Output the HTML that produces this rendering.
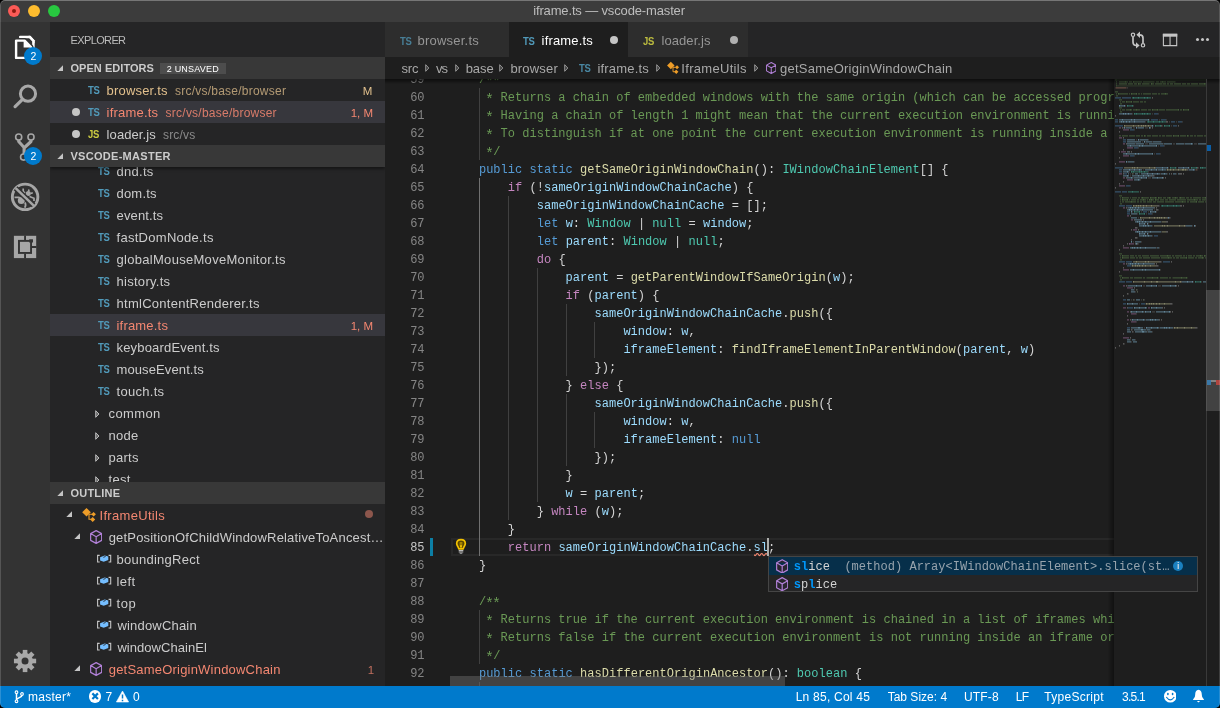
<!DOCTYPE html>
<html><head><meta charset="utf-8"><title>iframe.ts — vscode-master</title>
<style>

html,body{margin:0;padding:0;background:#000;}
body{width:1220px;height:708px;overflow:hidden;}
#win{will-change:transform;position:relative;width:1220px;height:708px;overflow:hidden;background:#1e1e1e;border-radius:5px;font-family:"Liberation Sans",sans-serif;font-size:13px;color:#ccc;}
.abs{position:absolute;}
.t{position:absolute;white-space:pre;}
#ed{position:absolute;left:0;top:0;width:1220px;height:708px;clip-path:inset(79px 106px 22px 385px);}
.cl{position:absolute;left:450px;height:18px;line-height:18px;white-space:pre;font-family:"Liberation Mono",monospace;font-size:12px;letter-spacing:0.023px;color:#d4d4d4;}
.cl i{font-style:normal;display:inline-block;width:7.224px;transform:translateY(2.7px) scale(1.25);}
.ln{position:absolute;left:385px;width:39.6px;text-align:right;height:18px;line-height:18px;font-family:"Liberation Mono",monospace;font-size:12px;letter-spacing:0.023px;}
.ic{position:absolute;font-weight:bold;font-size:10.3px;line-height:23px;height:22px;letter-spacing:-0.2px;transform-origin:0 0;transform:scaleX(0.92);}
.mono{font-family:"Liberation Mono",monospace;font-size:12px;letter-spacing:0.023px;white-space:pre;}

</style></head>
<body>
<div id="win">

<div class="abs" style="left:0;top:0;width:1220px;height:22px;background:#3c3c3c;"></div>
<div class="abs" style="left:8px;top:5px;width:12px;height:12px;border-radius:6px;background:#fc5b57;"></div>
<div class="abs" style="left:12px;top:9px;width:4px;height:4px;border-radius:2px;background:#8c1a10;"></div>
<div class="abs" style="left:28px;top:5px;width:12px;height:12px;border-radius:6px;background:#fdbc2e;"></div>
<div class="abs" style="left:48px;top:5px;width:12px;height:12px;border-radius:6px;background:#28c840;"></div>
<div class="t" style="left:533.20px;top:0px;height:22px;line-height:22px;color:#bdbdbd;font-size:13px;font-weight:normal;letter-spacing:-0.145px;">iframe.ts — vscode-master</div>


<div class="abs" style="left:0;top:22px;width:50px;height:664px;background:#333333;"></div>
<!-- files -->
<svg class="abs" style="left:0;top:22px" width="50" height="50" viewBox="0 0 50 50">
 <path d="M20.2 14.9 H29.6 L33.4 19 V31" fill="none" stroke="#fff" stroke-width="2.5" stroke-linejoin="round" stroke-linecap="round"/>
 <path d="M28.5 13.7 H30.4 L34.6 18.2 V21.5 Z" fill="#fff"/>
 <path d="M16.1 18.6 H24.6 L31 25 V35.9 H16.1 Z" fill="#333" stroke="#333" stroke-width="5" stroke-linejoin="round"/>
 <path d="M16.1 18.6 H24.6 L31 25 V35.9 H16.1 Z" fill="none" stroke="#fff" stroke-width="2.4" stroke-linejoin="round"/>
 <path d="M23.6 18.6 V25.6 H30.6 Z" fill="#fff"/>
</svg>
<div class="abs" style="left:23.8px;top:47px;width:18.4px;height:18.4px;border-radius:9.2px;background:#007acc;"></div>
<div class="abs" style="left:24.3px;top:47.3px;width:18.4px;height:18.4px;color:#fff;font-size:10.5px;line-height:18.4px;text-align:center;">2</div>
<!-- search -->
<svg class="abs" style="left:0;top:72px" width="50" height="50" viewBox="0 0 50 50">
 <circle cx="28" cy="21.7" r="7.6" fill="none" stroke="#a8a8a8" stroke-width="3"/>
 <path d="M22.5 27.4 L15.1 34.6" stroke="#a8a8a8" stroke-width="3.3" stroke-linecap="round"/>
</svg>
<!-- scm -->
<svg class="abs" style="left:0;top:122px" width="50" height="50" viewBox="0 0 50 50">
 <g fill="none" stroke="#a6a6a6">
 <path d="M18.7 17.5 V19.5 L24.1 25.5 V32 M31 17.5 V19.5 L24.6 25.5" stroke-width="3.1" stroke-linejoin="round"/>
 <circle cx="18.7" cy="15" r="3.05" stroke-width="1.6" fill="#333"/>
 <circle cx="31" cy="15" r="3.05" stroke-width="1.6" fill="#333"/>
 <circle cx="23.6" cy="35.1" r="3.05" stroke-width="1.6" fill="#333"/>
 </g>
</svg>
<div class="abs" style="left:23.8px;top:146.8px;width:18.4px;height:18.4px;border-radius:9.2px;background:#007acc;"></div>
<div class="abs" style="left:24.3px;top:147.1px;width:18.4px;height:18.4px;color:#fff;font-size:10.5px;line-height:18.4px;text-align:center;">2</div>
<!-- debug -->
<svg class="abs" style="left:0;top:172px" width="50" height="50" viewBox="0 0 50 50">
 <circle cx="25.1" cy="24.9" r="12.75" fill="none" stroke="#a6a6a6" stroke-width="2.9"/>
 <circle cx="21.3" cy="28.6" r="3.5" fill="#a6a6a6"/>
 <circle cx="28.3" cy="21.4" r="2.5" fill="#a6a6a6"/>
 <path d="M14.5 25.4 H19 L20 26.5 M25 30.5 Q26.5 33.5 24.7 35.8 M23.2 16.6 V19.3 L25 21 M29 17.5 L28.5 19.5 M30.5 21.5 L32.8 20.8 M29.5 24.5 L34 26.3 V29" stroke="#a6a6a6" stroke-width="1.7" fill="none"/>
 <path d="M15.6 16.2 L33.6 33.4" stroke="#333" stroke-width="5.4"/>
 <path d="M15.6 16.2 L34 33.8" stroke="#a6a6a6" stroke-width="2.5"/>
</svg>
<!-- extensions -->
<svg class="abs" style="left:0;top:222px" width="50" height="50" viewBox="0 0 50 50">
 <rect x="13.9" y="13.8" width="22.3" height="22.3" fill="#a6a6a6"/>
 <rect x="18" y="17.9" width="14" height="14" fill="#333"/>
 <rect x="19.95" y="19.85" width="10.15" height="10.15" fill="#a6a6a6"/>
 <rect x="24.1" y="13.5" width="1.9" height="5" fill="#333"/>
 <rect x="24.1" y="31.5" width="1.9" height="5" fill="#333"/>
 <rect x="31.5" y="24" width="5" height="2" fill="#333"/>
 <rect x="29.2" y="17.3" width="3.8" height="3.2" fill="#333"/>
</svg>
<!-- gear -->
<svg class="abs" style="left:0;top:636px" width="50" height="50" viewBox="0 0 50 50">
 <g transform="translate(25.05 25)" fill="#a8a8a8">
   <rect x="-2.3" y="-11.1" width="4.6" height="22.2"/>
   <rect x="-2.3" y="-11.1" width="4.6" height="22.2" transform="rotate(45)"/>
   <rect x="-2.3" y="-11.1" width="4.6" height="22.2" transform="rotate(90)"/>
   <rect x="-2.3" y="-11.1" width="4.6" height="22.2" transform="rotate(135)"/>
  <circle r="7.9"/>
  <circle r="3.5" fill="#333"/>
 </g>
</svg>

<div class="abs" style="left:50px;top:22px;width:335px;height:664px;background:#252526;"></div>
<div class="t" style="left:70.50px;top:29px;height:22px;line-height:22px;color:#bbbbbb;font-size:11px;font-weight:normal;letter-spacing:-0.624px;">EXPLORER</div>
<span class="ic" style="left:98.4px;top:160px;color:#519aba;opacity:1">TS</span>
<div class="t" style="left:116.50px;top:161px;height:22px;line-height:22px;color:#cccccc;font-size:13px;font-weight:normal;letter-spacing:0.277px;">dnd.ts</div>
<span class="ic" style="left:98.4px;top:182px;color:#519aba;opacity:1">TS</span>
<div class="t" style="left:116.50px;top:183px;height:22px;line-height:22px;color:#cccccc;font-size:13px;font-weight:normal;letter-spacing:0.197px;">dom.ts</div>
<span class="ic" style="left:98.4px;top:204px;color:#519aba;opacity:1">TS</span>
<div class="t" style="left:116.50px;top:205px;height:22px;line-height:22px;color:#cccccc;font-size:13px;font-weight:normal;letter-spacing:0.154px;">event.ts</div>
<span class="ic" style="left:98.4px;top:226px;color:#519aba;opacity:1">TS</span>
<div class="t" style="left:116.50px;top:227px;height:22px;line-height:22px;color:#cccccc;font-size:13px;font-weight:normal;letter-spacing:0.284px;">fastDomNode.ts</div>
<span class="ic" style="left:98.4px;top:248px;color:#519aba;opacity:1">TS</span>
<div class="t" style="left:116.50px;top:249px;height:22px;line-height:22px;color:#cccccc;font-size:13px;font-weight:normal;letter-spacing:0.298px;">globalMouseMoveMonitor.ts</div>
<span class="ic" style="left:98.4px;top:270px;color:#519aba;opacity:1">TS</span>
<div class="t" style="left:116.50px;top:271px;height:22px;line-height:22px;color:#cccccc;font-size:13px;font-weight:normal;letter-spacing:0.284px;">history.ts</div>
<span class="ic" style="left:98.4px;top:292px;color:#519aba;opacity:1">TS</span>
<div class="t" style="left:116.50px;top:293px;height:22px;line-height:22px;color:#cccccc;font-size:13px;font-weight:normal;letter-spacing:0.267px;">htmlContentRenderer.ts</div>
<div class="abs" style="left:50px;top:314px;width:335px;height:22px;background:#37373d;"></div>
<span class="ic" style="left:98.4px;top:314px;color:#519aba;opacity:1">TS</span>
<div class="t" style="left:116.50px;top:315px;height:22px;line-height:22px;color:#f48771;font-size:13px;font-weight:normal;letter-spacing:0.195px;">iframe.ts</div>
<div class="t" style="left:350.70px;top:315px;height:22px;line-height:22px;color:#f48771;font-size:11.5px;font-weight:normal;letter-spacing:-0.029px;">1, M</div>
<span class="ic" style="left:98.4px;top:336px;color:#519aba;opacity:1">TS</span>
<div class="t" style="left:116.50px;top:337px;height:22px;line-height:22px;color:#cccccc;font-size:13px;font-weight:normal;letter-spacing:0.177px;">keyboardEvent.ts</div>
<span class="ic" style="left:98.4px;top:358px;color:#519aba;opacity:1">TS</span>
<div class="t" style="left:116.50px;top:359px;height:22px;line-height:22px;color:#cccccc;font-size:13px;font-weight:normal;letter-spacing:0.110px;">mouseEvent.ts</div>
<span class="ic" style="left:98.4px;top:380px;color:#519aba;opacity:1">TS</span>
<div class="t" style="left:116.50px;top:381px;height:22px;line-height:22px;color:#cccccc;font-size:13px;font-weight:normal;letter-spacing:0.296px;">touch.ts</div>
<svg class="abs" style="left:94.5px;top:409.5px" width="6" height="8" viewBox="0 0 6 8"><path d="M0.7 0.7 L4 4 L0.7 7.3 Z" fill="#6a6a6a" stroke="#c5c5c5" stroke-width="0.9"/></svg>
<div class="t" style="left:108.50px;top:403px;height:22px;line-height:22px;color:#cccccc;font-size:13px;font-weight:normal;letter-spacing:0.396px;">common</div>
<svg class="abs" style="left:94.5px;top:431.5px" width="6" height="8" viewBox="0 0 6 8"><path d="M0.7 0.7 L4 4 L0.7 7.3 Z" fill="#6a6a6a" stroke="#c5c5c5" stroke-width="0.9"/></svg>
<div class="t" style="left:108.50px;top:425px;height:22px;line-height:22px;color:#cccccc;font-size:13px;font-weight:normal;letter-spacing:0.237px;">node</div>
<svg class="abs" style="left:94.5px;top:453.5px" width="6" height="8" viewBox="0 0 6 8"><path d="M0.7 0.7 L4 4 L0.7 7.3 Z" fill="#6a6a6a" stroke="#c5c5c5" stroke-width="0.9"/></svg>
<div class="t" style="left:108.50px;top:447px;height:22px;line-height:22px;color:#cccccc;font-size:13px;font-weight:normal;letter-spacing:0.275px;">parts</div>
<svg class="abs" style="left:94.5px;top:475.5px" width="6" height="8" viewBox="0 0 6 8"><path d="M0.7 0.7 L4 4 L0.7 7.3 Z" fill="#6a6a6a" stroke="#c5c5c5" stroke-width="0.9"/></svg>
<div class="t" style="left:108.50px;top:469px;height:22px;line-height:22px;color:#cccccc;font-size:13px;font-weight:normal;letter-spacing:0.286px;">test</div>
<div class="abs" style="left:50px;top:57px;width:335px;height:22px;background:#383838;"></div>
<svg class="abs" style="left:57px;top:65px" width="7" height="7" viewBox="0 0 7 7"><path d="M6 0.3 V6 H0.3 Z" fill="#c5c5c5"/></svg>
<div class="t" style="left:70.50px;top:57px;height:22px;line-height:22px;color:#cccccc;font-size:11px;font-weight:bold;letter-spacing:0.047px;">OPEN EDITORS</div>
<div class="abs" style="left:160px;top:63px;width:66px;height:11px;background:#4d4d4d;"></div>
<div class="t" style="left:166.70px;top:57.5px;height:22px;line-height:22px;color:#ffffff;font-size:9px;font-weight:normal;letter-spacing:0.219px;">2 UNSAVED</div>
<div class="abs" style="left:50px;top:79px;width:335px;height:66px;background:#252526;"></div>
<span class="ic" style="left:87.9px;top:79px;color:#519aba;opacity:1">TS</span>
<div class="t" style="left:106.60px;top:80px;height:22px;line-height:22px;color:#e2c08d;font-size:13px;font-weight:normal;letter-spacing:0.184px;">browser.ts</div>
<div class="t" style="left:175.00px;top:80px;height:22px;line-height:22px;color:#e2c08d;font-size:12px;font-weight:normal;letter-spacing:0.233px;opacity:.75;">src/vs/base/browser</div>
<div class="t" style="left:362.70px;top:80px;height:22px;line-height:22px;color:#e2c08d;font-size:11.5px;font-weight:normal;letter-spacing:0.177px;">M</div>
<div class="abs" style="left:50px;top:101px;width:335px;height:22px;background:#37373d;"></div>
<div class="abs" style="left:72px;top:108px;width:8px;height:8px;border-radius:4px;background:#c5c5c5;opacity:1"></div>
<span class="ic" style="left:87.9px;top:101px;color:#519aba;opacity:1">TS</span>
<div class="t" style="left:106.60px;top:102px;height:22px;line-height:22px;color:#f48771;font-size:13px;font-weight:normal;letter-spacing:0.195px;">iframe.ts</div>
<div class="t" style="left:165.60px;top:102px;height:22px;line-height:22px;color:#f48771;font-size:12px;font-weight:normal;letter-spacing:0.239px;opacity:.85;">src/vs/base/browser</div>
<div class="t" style="left:350.70px;top:102px;height:22px;line-height:22px;color:#f48771;font-size:11.5px;font-weight:normal;letter-spacing:-0.029px;">1, M</div>
<div class="abs" style="left:72px;top:130px;width:8px;height:8px;border-radius:4px;background:#c5c5c5;opacity:1"></div>
<span class="ic" style="left:87.9px;top:123px;color:#cbcb41;opacity:1">JS</span>
<div class="t" style="left:106.60px;top:124px;height:22px;line-height:22px;color:#cccccc;font-size:13px;font-weight:normal;letter-spacing:0.085px;">loader.js</div>
<div class="t" style="left:163.00px;top:124px;height:22px;line-height:22px;color:#cccccc;font-size:12px;font-weight:normal;letter-spacing:0.174px;opacity:.6;">src/vs</div>
<div class="abs" style="left:50px;top:145px;width:335px;height:22px;background:#383838;box-shadow:0 2px 3px rgba(0,0,0,.45);clip-path:inset(0 0 -8px 0);"></div>
<svg class="abs" style="left:57px;top:153px" width="7" height="7" viewBox="0 0 7 7"><path d="M6 0.3 V6 H0.3 Z" fill="#c5c5c5"/></svg>
<div class="t" style="left:70.50px;top:145px;height:22px;line-height:22px;color:#cccccc;font-size:11px;font-weight:bold;letter-spacing:0.282px;">VSCODE-MASTER</div>
<div class="abs" style="left:50px;top:482px;width:335px;height:204px;background:#252526;"></div>
<div class="abs" style="left:50px;top:482px;width:335px;height:22px;background:#383838;"></div>
<svg class="abs" style="left:57px;top:490px" width="7" height="7" viewBox="0 0 7 7"><path d="M6 0.3 V6 H0.3 Z" fill="#c5c5c5"/></svg>
<div class="t" style="left:70.50px;top:482px;height:22px;line-height:22px;color:#cccccc;font-size:11px;font-weight:bold;letter-spacing:0.210px;">OUTLINE</div>
<svg class="abs" style="left:66px;top:511px" width="7" height="7" viewBox="0 0 7 7"><path d="M6 0.3 V6 H0.3 Z" fill="#c5c5c5"/></svg>
<svg class="abs" style="left:80.5px;top:507px" width="16" height="16" viewBox="0 0 16 16"><path d="M5.5 0.95 L9.8 5.25 L5.5 9.55 L1.2 5.25 Z" fill="#ee9d28"/><path d="M8 7.2 H11 M8 7 V12.3 H10" fill="none" stroke="#ee9d28" stroke-width="1.1"/><path d="M12.6 4.9 L14.9 7.2 L12.6 9.5 L10.3 7.2 Z M11.7 9.9 L14.2 12.4 L11.7 14.9 L9.2 12.4 Z" fill="#ee9d28"/></svg>
<div class="t" style="left:99.50px;top:505px;height:22px;line-height:22px;color:#f48771;font-size:13px;font-weight:normal;letter-spacing:0.308px;">IframeUtils</div>
<div class="abs" style="left:365.4px;top:510.2px;width:8px;height:8px;border-radius:4px;background:#f48771;opacity:0.5"></div>
<svg class="abs" style="left:74.3px;top:533px" width="7" height="7" viewBox="0 0 7 7"><path d="M6 0.3 V6 H0.3 Z" fill="#c5c5c5"/></svg>
<svg class="abs" style="left:89.8px;top:529.9px" width="12.3" height="14" viewBox="0 0 12.4 14" preserveAspectRatio="none"><path d="M6.2 0.65 L11.75 3.6 V10.4 L6.2 13.35 L0.65 10.4 V3.6 Z M0.65 3.6 L6.2 6.7 L11.75 3.6 M6.2 6.7 V13.35" fill="none" stroke="#b180d7" stroke-width="1.2" stroke-linejoin="round"/></svg>
<div class="t" style="left:108.70px;top:527px;height:22px;line-height:22px;color:#cccccc;font-size:13px;font-weight:normal;letter-spacing:0.186px;">getPositionOfChildWindowRelativeToAncest…</div>
<svg class="abs" style="left:96px;top:553.3px" width="16" height="12" viewBox="0 0 16 12"><path d="M3.7 2.4 H1.6 V9 H3.7 M12.6 2.4 H14.7 V9 H12.6" fill="none" stroke="#c5c5c5" stroke-width="1.1"/><path d="M4.1 4.3 L8.7 2.4 L12.3 3.5 V7 L7.7 8.8 L4.1 7.5 Z" fill="#75beff"/><path d="M7.3 4.3 L9.6 3.5" fill="none" stroke="#252526" stroke-width="0.9"/></svg>
<div class="t" style="left:116.40px;top:549px;height:22px;line-height:22px;color:#cccccc;font-size:13px;font-weight:normal;letter-spacing:0.271px;">boundingRect</div>
<svg class="abs" style="left:96px;top:575.3px" width="16" height="12" viewBox="0 0 16 12"><path d="M3.7 2.4 H1.6 V9 H3.7 M12.6 2.4 H14.7 V9 H12.6" fill="none" stroke="#c5c5c5" stroke-width="1.1"/><path d="M4.1 4.3 L8.7 2.4 L12.3 3.5 V7 L7.7 8.8 L4.1 7.5 Z" fill="#75beff"/><path d="M7.3 4.3 L9.6 3.5" fill="none" stroke="#252526" stroke-width="0.9"/></svg>
<div class="t" style="left:116.40px;top:571px;height:22px;line-height:22px;color:#cccccc;font-size:13px;font-weight:normal;letter-spacing:0.490px;">left</div>
<svg class="abs" style="left:96px;top:597.3px" width="16" height="12" viewBox="0 0 16 12"><path d="M3.7 2.4 H1.6 V9 H3.7 M12.6 2.4 H14.7 V9 H12.6" fill="none" stroke="#c5c5c5" stroke-width="1.1"/><path d="M4.1 4.3 L8.7 2.4 L12.3 3.5 V7 L7.7 8.8 L4.1 7.5 Z" fill="#75beff"/><path d="M7.3 4.3 L9.6 3.5" fill="none" stroke="#252526" stroke-width="0.9"/></svg>
<div class="t" style="left:116.40px;top:593px;height:22px;line-height:22px;color:#cccccc;font-size:13px;font-weight:normal;letter-spacing:0.679px;">top</div>
<svg class="abs" style="left:96px;top:619.3px" width="16" height="12" viewBox="0 0 16 12"><path d="M3.7 2.4 H1.6 V9 H3.7 M12.6 2.4 H14.7 V9 H12.6" fill="none" stroke="#c5c5c5" stroke-width="1.1"/><path d="M4.1 4.3 L8.7 2.4 L12.3 3.5 V7 L7.7 8.8 L4.1 7.5 Z" fill="#75beff"/><path d="M7.3 4.3 L9.6 3.5" fill="none" stroke="#252526" stroke-width="0.9"/></svg>
<div class="t" style="left:117.40px;top:615px;height:22px;line-height:22px;color:#cccccc;font-size:13px;font-weight:normal;letter-spacing:0.191px;">windowChain</div>
<svg class="abs" style="left:96px;top:641.3px" width="16" height="12" viewBox="0 0 16 12"><path d="M3.7 2.4 H1.6 V9 H3.7 M12.6 2.4 H14.7 V9 H12.6" fill="none" stroke="#c5c5c5" stroke-width="1.1"/><path d="M4.1 4.3 L8.7 2.4 L12.3 3.5 V7 L7.7 8.8 L4.1 7.5 Z" fill="#75beff"/><path d="M7.3 4.3 L9.6 3.5" fill="none" stroke="#252526" stroke-width="0.9"/></svg>
<div class="t" style="left:117.40px;top:637px;height:22px;line-height:22px;color:#cccccc;font-size:13px;font-weight:normal;letter-spacing:0.051px;">windowChainEl</div>
<svg class="abs" style="left:74.3px;top:665px" width="7" height="7" viewBox="0 0 7 7"><path d="M6 0.3 V6 H0.3 Z" fill="#c5c5c5"/></svg>
<svg class="abs" style="left:89.8px;top:661.9px" width="12.3" height="14" viewBox="0 0 12.4 14" preserveAspectRatio="none"><path d="M6.2 0.65 L11.75 3.6 V10.4 L6.2 13.35 L0.65 10.4 V3.6 Z M0.65 3.6 L6.2 6.7 L11.75 3.6 M6.2 6.7 V13.35" fill="none" stroke="#b180d7" stroke-width="1.2" stroke-linejoin="round"/></svg>
<div class="t" style="left:108.70px;top:659px;height:22px;line-height:22px;color:#f48771;font-size:13px;font-weight:normal;letter-spacing:0.209px;">getSameOriginWindowChain</div>
<div class="t" style="left:367.80px;top:659px;height:22px;line-height:22px;color:#f48771;font-size:11.5px;font-weight:normal;letter-spacing:0.177px;opacity:.75;">1</div>

<div class="abs" style="left:385px;top:22px;width:835px;height:35px;background:#252526;"></div>
<div class="abs" style="left:385px;top:22px;width:123.7px;height:35px;background:#2d2d2d;"></div>
<div class="abs" style="left:628.4px;top:22px;width:119.6px;height:35px;background:#2d2d2d;"></div>
<div class="abs" style="left:508.7px;top:22px;width:119.7px;height:35px;background:#1e1e1e;"></div>
<span class="ic" style="left:399.59999999999997px;top:29.5px;color:#519aba;opacity:0.75">TS</span>
<div class="t" style="left:417.50px;top:30px;height:22px;line-height:22px;color:#969696;font-size:13px;font-weight:normal;letter-spacing:0.229px;">browser.ts</div>
<span class="ic" style="left:523.0px;top:29.5px;color:#519aba;opacity:1">TS</span>
<div class="t" style="left:541.60px;top:30px;height:22px;line-height:22px;color:#ffffff;font-size:13px;font-weight:normal;letter-spacing:0.170px;">iframe.ts</div>
<div class="abs" style="left:610px;top:36px;width:8px;height:8px;border-radius:4px;background:#c5c5c5;opacity:1"></div>
<span class="ic" style="left:643.4px;top:29.5px;color:#cbcb41;opacity:0.9">JS</span>
<div class="t" style="left:661.50px;top:30px;height:22px;line-height:22px;color:#969696;font-size:13px;font-weight:normal;letter-spacing:0.073px;">loader.js</div>
<div class="abs" style="left:730px;top:36px;width:8px;height:8px;border-radius:4px;background:#b0b0b0;opacity:1"></div>
<!-- actions -->
<svg class="abs" style="left:1128px;top:28px" width="22" height="24" viewBox="0 0 22 24">
 <g fill="none" stroke="#c5c5c5" stroke-width="1.7">
  <path d="M5 8.6 V14 Q5 17.4 8.4 17.4"/>
  <path d="M15 15.4 V10 Q15 6.8 11.6 6.8"/>
 </g>
 <circle cx="5" cy="6.8" r="1.7" fill="#252526" stroke="#c5c5c5" stroke-width="1.2"/>
 <circle cx="15" cy="17.3" r="1.7" fill="#252526" stroke="#c5c5c5" stroke-width="1.2"/>
 <path d="M8 14.2 L11.6 17.4 L8 20.6 Z" fill="#c5c5c5"/>
 <path d="M12 3.6 L8.4 6.8 L12 10 Z" fill="#c5c5c5"/>
</svg>
<svg class="abs" style="left:1162px;top:33px" width="16" height="14" viewBox="0 0 16 14">
 <path d="M1.4 1.3 H14.7 V12.6 H1.4 Z M8.05 3 V12.6" fill="none" stroke="#c5c5c5" stroke-width="1.1"/>
 <rect x="0.85" y="0.8" width="14.4" height="2.9" fill="#c5c5c5"/>
</svg>
<div class="abs" style="left:1195.8px;top:38.1px;width:3.2px;height:3.2px;border-radius:2px;background:#c5c5c5"></div>
<div class="abs" style="left:1200.9px;top:38.1px;width:3.2px;height:3.2px;border-radius:2px;background:#c5c5c5"></div>
<div class="abs" style="left:1205.9px;top:38.1px;width:3.2px;height:3.2px;border-radius:2px;background:#c5c5c5"></div>
<!-- breadcrumbs -->
<div class="t" style="left:401.40px;top:58px;height:22px;line-height:22px;color:#a9a9a9;font-size:13px;font-weight:normal;letter-spacing:-0.065px;">src</div><svg class="abs" style="left:425.2px;top:63.8px" width="5" height="8" viewBox="0 0 5 8"><path d="M0.7 0.7 L3.8 4 L0.7 7.3 Z" fill="#3c3c3c" stroke="#a0a0a0" stroke-width="0.9"/></svg>
<div class="t" style="left:436.10px;top:58px;height:22px;line-height:22px;color:#a9a9a9;font-size:13px;font-weight:normal;letter-spacing:-1.000px;">vs</div><svg class="abs" style="left:454.5px;top:63.8px" width="5" height="8" viewBox="0 0 5 8"><path d="M0.7 0.7 L3.8 4 L0.7 7.3 Z" fill="#3c3c3c" stroke="#a0a0a0" stroke-width="0.9"/></svg>
<div class="t" style="left:465.70px;top:58px;height:22px;line-height:22px;color:#a9a9a9;font-size:13px;font-weight:normal;letter-spacing:-0.053px;">base</div><svg class="abs" style="left:499.09999999999997px;top:63.8px" width="5" height="8" viewBox="0 0 5 8"><path d="M0.7 0.7 L3.8 4 L0.7 7.3 Z" fill="#3c3c3c" stroke="#a0a0a0" stroke-width="0.9"/></svg>
<div class="t" style="left:510.40px;top:58px;height:22px;line-height:22px;color:#a9a9a9;font-size:13px;font-weight:normal;letter-spacing:0.182px;">browser</div><svg class="abs" style="left:564.3000000000001px;top:63.8px" width="5" height="8" viewBox="0 0 5 8"><path d="M0.7 0.7 L3.8 4 L0.7 7.3 Z" fill="#3c3c3c" stroke="#a0a0a0" stroke-width="0.9"/></svg>
<span class="ic" style="left:578.9px;top:57px;color:#519aba;opacity:0.85">TS</span>
<div class="t" style="left:597.50px;top:58px;height:22px;line-height:22px;color:#a9a9a9;font-size:13px;font-weight:normal;letter-spacing:0.170px;">iframe.ts</div><svg class="abs" style="left:655.7px;top:63.8px" width="5" height="8" viewBox="0 0 5 8"><path d="M0.7 0.7 L3.8 4 L0.7 7.3 Z" fill="#3c3c3c" stroke="#a0a0a0" stroke-width="0.9"/></svg>
<svg class="abs" style="left:666px;top:61.3px" width="14.0" height="14.0" viewBox="0 0 16 16"><path d="M5.5 0.95 L9.8 5.25 L5.5 9.55 L1.2 5.25 Z" fill="#ee9d28"/><path d="M8 7.2 H11 M8 7 V12.3 H10" fill="none" stroke="#ee9d28" stroke-width="1.1"/><path d="M12.6 4.9 L14.9 7.2 L12.6 9.5 L10.3 7.2 Z M11.7 9.9 L14.2 12.4 L11.7 14.9 L9.2 12.4 Z" fill="#ee9d28"/></svg>
<div class="t" style="left:681.30px;top:58px;height:22px;line-height:22px;color:#a9a9a9;font-size:13px;font-weight:normal;letter-spacing:0.308px;">IframeUtils</div><svg class="abs" style="left:753.5px;top:63.8px" width="5" height="8" viewBox="0 0 5 8"><path d="M0.7 0.7 L3.8 4 L0.7 7.3 Z" fill="#3c3c3c" stroke="#a0a0a0" stroke-width="0.9"/></svg>
<svg class="abs" style="left:765.5px;top:61.9px" width="10.5" height="12" viewBox="0 0 12.4 14" preserveAspectRatio="none"><path d="M6.2 0.65 L11.75 3.6 V10.4 L6.2 13.35 L0.65 10.4 V3.6 Z M0.65 3.6 L6.2 6.7 L11.75 3.6 M6.2 6.7 V13.35" fill="none" stroke="#b180d7" stroke-width="1.2" stroke-linejoin="round"/></svg>
<div class="t" style="left:780.00px;top:58px;height:22px;line-height:22px;color:#a9a9a9;font-size:13px;font-weight:normal;letter-spacing:0.231px;">getSameOriginWindowChain</div>

<div id="ed">
<div class="abs" style="left:450.8px;top:538px;width:670px;height:18px;box-sizing:border-box;border:2px solid #282828;"></div>

<div style="position:absolute;left:479px;top:88px;width:1px;height:72px;background:#404040"></div>
<div style="position:absolute;left:479px;top:178px;width:1px;height:378px;background:#707070"></div>
<div style="position:absolute;left:508px;top:196px;width:1px;height:324px;background:#404040"></div>
<div style="position:absolute;left:537px;top:268px;width:1px;height:234px;background:#404040"></div>
<div style="position:absolute;left:566px;top:304px;width:1px;height:72px;background:#404040"></div>
<div style="position:absolute;left:566px;top:394px;width:1px;height:72px;background:#404040"></div>
<div style="position:absolute;left:594px;top:322px;width:1px;height:36px;background:#404040"></div>
<div style="position:absolute;left:594px;top:412px;width:1px;height:36px;background:#404040"></div>
<div style="position:absolute;left:479px;top:610px;width:1px;height:54px;background:#404040"></div>
<div style="position:absolute;left:479px;top:682px;width:1px;height:18px;background:#404040"></div>
<div class="cl" style="top:71px"><span style="color:#D4D4D4">    </span><span style="color:#6A9955">/<i>*</i><i>*</i></span></div>
<div class="ln" style="top:71px;color:#858585">59</div>
<div class="cl" style="top:89px"><span style="color:#6A9955">     <i>*</i> Returns a chain of embedded windows with the same origin (which can be accessed programmatically).</span></div>
<div class="ln" style="top:89px;color:#858585">60</div>
<div class="cl" style="top:107px"><span style="color:#6A9955">     <i>*</i> Having a chain of length 1 might mean that the current execution environment is running outside of an iframe or inside an iframe</span></div>
<div class="ln" style="top:107px;color:#858585">61</div>
<div class="cl" style="top:125px"><span style="color:#6A9955">     <i>*</i> To distinguish if at one point the current execution environment is running inside a window with a different origin, see hasDiff</span></div>
<div class="ln" style="top:125px;color:#858585">62</div>
<div class="cl" style="top:143px"><span style="color:#6A9955">     <i>*</i>/</span></div>
<div class="ln" style="top:143px;color:#858585">63</div>
<div class="cl" style="top:161px"><span style="color:#D4D4D4">    </span><span style="color:#569CD6">public</span><span style="color:#D4D4D4"> </span><span style="color:#569CD6">static</span><span style="color:#D4D4D4"> </span><span style="color:#DCDCAA">getSameOriginWindowChain</span><span style="color:#D4D4D4">(): </span><span style="color:#4EC9B0">IWindowChainElement</span><span style="color:#D4D4D4">[] {</span></div>
<div class="ln" style="top:161px;color:#858585">64</div>
<div class="cl" style="top:179px"><span style="color:#D4D4D4">        </span><span style="color:#C586C0">if</span><span style="color:#D4D4D4"> (!</span><span style="color:#9CDCFE">sameOriginWindowChainCache</span><span style="color:#D4D4D4">) {</span></div>
<div class="ln" style="top:179px;color:#858585">65</div>
<div class="cl" style="top:197px"><span style="color:#D4D4D4">            </span><span style="color:#9CDCFE">sameOriginWindowChainCache</span><span style="color:#D4D4D4"> = [];</span></div>
<div class="ln" style="top:197px;color:#858585">66</div>
<div class="cl" style="top:215px"><span style="color:#D4D4D4">            </span><span style="color:#569CD6">let</span><span style="color:#D4D4D4"> </span><span style="color:#9CDCFE">w</span><span style="color:#D4D4D4">: </span><span style="color:#4EC9B0">Window</span><span style="color:#D4D4D4"> | </span><span style="color:#4EC9B0">null</span><span style="color:#D4D4D4"> = </span><span style="color:#9CDCFE">window</span><span style="color:#D4D4D4">;</span></div>
<div class="ln" style="top:215px;color:#858585">67</div>
<div class="cl" style="top:233px"><span style="color:#D4D4D4">            </span><span style="color:#569CD6">let</span><span style="color:#D4D4D4"> </span><span style="color:#9CDCFE">parent</span><span style="color:#D4D4D4">: </span><span style="color:#4EC9B0">Window</span><span style="color:#D4D4D4"> | </span><span style="color:#4EC9B0">null</span><span style="color:#D4D4D4">;</span></div>
<div class="ln" style="top:233px;color:#858585">68</div>
<div class="cl" style="top:251px"><span style="color:#D4D4D4">            </span><span style="color:#C586C0">do</span><span style="color:#D4D4D4"> {</span></div>
<div class="ln" style="top:251px;color:#858585">69</div>
<div class="cl" style="top:269px"><span style="color:#D4D4D4">                </span><span style="color:#9CDCFE">parent</span><span style="color:#D4D4D4"> = </span><span style="color:#DCDCAA">getParentWindowIfSameOrigin</span><span style="color:#D4D4D4">(</span><span style="color:#9CDCFE">w</span><span style="color:#D4D4D4">);</span></div>
<div class="ln" style="top:269px;color:#858585">70</div>
<div class="cl" style="top:287px"><span style="color:#D4D4D4">                </span><span style="color:#C586C0">if</span><span style="color:#D4D4D4"> (</span><span style="color:#9CDCFE">parent</span><span style="color:#D4D4D4">) {</span></div>
<div class="ln" style="top:287px;color:#858585">71</div>
<div class="cl" style="top:305px"><span style="color:#D4D4D4">                    </span><span style="color:#9CDCFE">sameOriginWindowChainCache</span><span style="color:#D4D4D4">.</span><span style="color:#DCDCAA">push</span><span style="color:#D4D4D4">({</span></div>
<div class="ln" style="top:305px;color:#858585">72</div>
<div class="cl" style="top:323px"><span style="color:#D4D4D4">                        </span><span style="color:#9CDCFE">window</span><span style="color:#D4D4D4">: </span><span style="color:#9CDCFE">w</span><span style="color:#D4D4D4">,</span></div>
<div class="ln" style="top:323px;color:#858585">73</div>
<div class="cl" style="top:341px"><span style="color:#D4D4D4">                        </span><span style="color:#9CDCFE">iframeElement</span><span style="color:#D4D4D4">: </span><span style="color:#DCDCAA">findIframeElementInParentWindow</span><span style="color:#D4D4D4">(</span><span style="color:#9CDCFE">parent</span><span style="color:#D4D4D4">, </span><span style="color:#9CDCFE">w</span><span style="color:#D4D4D4">)</span></div>
<div class="ln" style="top:341px;color:#858585">74</div>
<div class="cl" style="top:359px"><span style="color:#D4D4D4">                    });</span></div>
<div class="ln" style="top:359px;color:#858585">75</div>
<div class="cl" style="top:377px"><span style="color:#D4D4D4">                } </span><span style="color:#C586C0">else</span><span style="color:#D4D4D4"> {</span></div>
<div class="ln" style="top:377px;color:#858585">76</div>
<div class="cl" style="top:395px"><span style="color:#D4D4D4">                    </span><span style="color:#9CDCFE">sameOriginWindowChainCache</span><span style="color:#D4D4D4">.</span><span style="color:#DCDCAA">push</span><span style="color:#D4D4D4">({</span></div>
<div class="ln" style="top:395px;color:#858585">77</div>
<div class="cl" style="top:413px"><span style="color:#D4D4D4">                        </span><span style="color:#9CDCFE">window</span><span style="color:#D4D4D4">: </span><span style="color:#9CDCFE">w</span><span style="color:#D4D4D4">,</span></div>
<div class="ln" style="top:413px;color:#858585">78</div>
<div class="cl" style="top:431px"><span style="color:#D4D4D4">                        </span><span style="color:#9CDCFE">iframeElement</span><span style="color:#D4D4D4">: </span><span style="color:#569CD6">null</span></div>
<div class="ln" style="top:431px;color:#858585">79</div>
<div class="cl" style="top:449px"><span style="color:#D4D4D4">                    });</span></div>
<div class="ln" style="top:449px;color:#858585">80</div>
<div class="cl" style="top:467px"><span style="color:#D4D4D4">                }</span></div>
<div class="ln" style="top:467px;color:#858585">81</div>
<div class="cl" style="top:485px"><span style="color:#D4D4D4">                </span><span style="color:#9CDCFE">w</span><span style="color:#D4D4D4"> = </span><span style="color:#9CDCFE">parent</span><span style="color:#D4D4D4">;</span></div>
<div class="ln" style="top:485px;color:#858585">82</div>
<div class="cl" style="top:503px"><span style="color:#D4D4D4">            } </span><span style="color:#C586C0">while</span><span style="color:#D4D4D4"> (</span><span style="color:#9CDCFE">w</span><span style="color:#D4D4D4">);</span></div>
<div class="ln" style="top:503px;color:#858585">83</div>
<div class="cl" style="top:521px"><span style="color:#D4D4D4">        }</span></div>
<div class="ln" style="top:521px;color:#858585">84</div>
<div class="cl" style="top:539px"><span style="color:#D4D4D4">        </span><span style="color:#C586C0">return</span><span style="color:#D4D4D4"> </span><span style="color:#9CDCFE">sameOriginWindowChainCache</span><span style="color:#D4D4D4">.</span><span style="color:#9CDCFE">sl</span><span style="color:#D4D4D4">;</span></div>
<div class="ln" style="top:539px;color:#c6c6c6">85</div>
<div class="cl" style="top:557px"><span style="color:#D4D4D4">    }</span></div>
<div class="ln" style="top:557px;color:#858585">86</div>
<div class="cl" style="top:575px"></div>
<div class="ln" style="top:575px;color:#858585">87</div>
<div class="cl" style="top:593px"><span style="color:#D4D4D4">    </span><span style="color:#6A9955">/<i>*</i><i>*</i></span></div>
<div class="ln" style="top:593px;color:#858585">88</div>
<div class="cl" style="top:611px"><span style="color:#6A9955">     <i>*</i> Returns true if the current execution environment is chained in a list of iframes which at one point ends in a window</span></div>
<div class="ln" style="top:611px;color:#858585">89</div>
<div class="cl" style="top:629px"><span style="color:#6A9955">     <i>*</i> Returns false if the current execution environment is not running inside an iframe or the entire chain of iframes have</span></div>
<div class="ln" style="top:629px;color:#858585">90</div>
<div class="cl" style="top:647px"><span style="color:#6A9955">     <i>*</i>/</span></div>
<div class="ln" style="top:647px;color:#858585">91</div>
<div class="cl" style="top:665px"><span style="color:#D4D4D4">    </span><span style="color:#569CD6">public</span><span style="color:#D4D4D4"> </span><span style="color:#569CD6">static</span><span style="color:#D4D4D4"> </span><span style="color:#DCDCAA">hasDifferentOriginAncestor</span><span style="color:#D4D4D4">(): </span><span style="color:#4EC9B0">boolean</span><span style="color:#D4D4D4"> {</span></div>
<div class="ln" style="top:665px;color:#858585">92</div>
<div class="cl" style="top:683px"><span style="color:#D4D4D4">        </span><span style="color:#C586C0">if</span><span style="color:#D4D4D4"> (!</span><span style="color:#9CDCFE">sameOriginWindowChainCache</span><span style="color:#D4D4D4">) {</span></div>
<div class="ln" style="top:683px;color:#858585">93</div>

<div class="abs" style="left:430px;top:538px;width:3px;height:18px;background:#0c7fa5;"></div>
<!-- lightbulb -->
<svg class="abs" style="left:454px;top:538px" width="14" height="18" viewBox="0 0 14 18">
 <path d="M7 1.7 C4.2 1.7 2.7 3.6 2.7 5.7 C2.7 7.6 4.5 8.6 4.8 10.9 H9.2 C9.5 8.6 11.3 7.6 11.3 5.7 C11.3 3.6 9.8 1.7 7 1.7 Z" fill="#5a4700" stroke="#f2c100" stroke-width="1.7" stroke-linejoin="round"/>
 <path d="M5.6 5 H8.4 M6.2 6.4 L6.6 9.6 M7.8 6.4 L7.4 9.6" fill="none" stroke="#f2c100" stroke-width="1"/>
 <rect x="4.7" y="12.1" width="4.6" height="0.9" fill="#d0d0d0"/><rect x="4.7" y="13.5" width="4.6" height="0.9" fill="#d0d0d0"/><rect x="5.7" y="14.8" width="2.6" height="0.8" fill="#d0d0d0"/>
</svg>
<!-- squiggle -->
<svg class="abs" style="left:753.6px;top:551.8px" width="15" height="5" viewBox="0 0 15 5"><path d="M0 2.5 Q1.1 4.6 2.2 2.5 T4.4 2.5 T6.6 2.5 T8.8 2.5 T11 2.5 T13.2 2.5 L13.8 1.9" fill="none" stroke="#f48771" stroke-width="1.15"/></svg>
<!-- cursor -->
<div class="abs" style="left:767px;top:538px;width:2px;height:18px;background:#aeafad;"></div>
<!-- horizontal scrollbar -->
<div class="abs" style="left:450px;top:676px;width:335px;height:10px;background:rgba(121,121,121,.4);"></div>

</div>
<svg class="abs" style="left:1115px;top:79px;opacity:1.0" width="91" height="300" viewBox="0 0 91 300"><path d="M2 0.9h89M39 2.9h1M60 2.9h1M34 4.9h1M47 4.9h1M2 6.9h89M43 30.9h1M31 198.9h1M43 198.9h1M57 198.9h1M72 198.9h1" stroke="#6A9955" stroke-opacity="0.2" stroke-width="1.1" fill="none"/><path d="M0 0.9h2M1 2.9h1M4 2.9h6M11 2.9h2M14 2.9h3M19 2.9h8M28 2.9h11M41 2.9h3M45 2.9h2M48 2.9h3M52 2.9h8M1 4.9h1M4 4.9h8M13 4.9h5M19 4.9h3M24 4.9h2M27 4.9h7M37 4.9h2M40 4.9h7M48 4.9h3M52 4.9h2M55 4.9h3M59 4.9h7M67 4.9h4M72 4.9h3M76 4.9h7M84 4.9h5M90 4.9h1M1 6.9h1M0 12.9h3M1 14.9h1M4 14.9h9M14 14.9h1M17 14.9h4M23 14.9h2M26 14.9h1M28 14.9h8M37 14.9h5M43 14.9h2M46 14.9h4M51 14.9h2M1 16.9h2M4 20.9h3M5 22.9h1M7 22.9h3M12 22.9h4M18 22.9h6M25 22.9h3M29 22.9h2M5 24.9h2M4 28.9h3M5 30.9h1M7 30.9h3M11 30.9h4M16 30.9h1M18 30.9h3M22 30.9h3M26 30.9h6M33 30.9h3M38 30.9h4M44 30.9h6M51 30.9h12M65 30.9h2M69 30.9h4M5 32.9h2M4 56.9h2M7 56.9h6M14 56.9h6M21 56.9h4M26 56.9h2M30 56.9h1M32 56.9h4M37 56.9h6M44 56.9h2M47 56.9h3M51 56.9h6M59 56.9h4M65 56.9h6M73 56.9h1M75 56.9h3M79 56.9h2M82 56.9h6M89 56.9h2M4 116.9h3M5 118.9h1M8 118.9h6M15 118.9h1M17 118.9h5M23 118.9h2M26 118.9h1M28 118.9h6M36 118.9h4M41 118.9h1M44 118.9h3M48 118.9h3M52 118.9h2M55 118.9h1M57 118.9h3M61 118.9h2M64 118.9h1M66 118.9h4M71 118.9h3M75 118.9h2M78 118.9h8M87 118.9h3M5 120.9h1M8 120.9h4M14 120.9h1M16 120.9h5M22 120.9h2M25 120.9h3M29 120.9h2M32 120.9h1M35 120.9h1M37 120.9h2M41 120.9h3M45 120.9h4M50 120.9h3M54 120.9h7M62 120.9h9M72 120.9h7M80 120.9h3M84 120.9h2M87 120.9h4M5 122.9h1M7 122.9h2M10 122.9h6M17 122.9h4M22 122.9h2M25 122.9h2M28 122.9h3M32 122.9h5M38 122.9h3M42 122.9h7M50 122.9h9M60 122.9h7M68 122.9h3M72 122.9h2M75 122.9h6M83 122.9h6M90 122.9h1M5 124.9h2M4 174.9h3M5 176.9h1M8 176.9h6M15 176.9h4M20 176.9h2M23 176.9h3M27 176.9h7M35 176.9h9M45 176.9h7M53 176.9h3M57 176.9h2M60 176.9h7M68 176.9h2M71 176.9h1M73 176.9h4M78 176.9h2M81 176.9h4M86 176.9h2M90 176.9h1M5 178.9h1M8 178.9h6M15 178.9h5M21 178.9h2M24 178.9h3M28 178.9h7M36 178.9h9M46 178.9h7M54 178.9h3M58 178.9h2M61 178.9h3M65 178.9h6M73 178.9h6M80 178.9h2M83 178.9h4M88 178.9h1M90 178.9h1M5 180.9h2M4 196.9h3M5 198.9h1M8 198.9h6M15 198.9h3M19 198.9h8M28 198.9h2M32 198.9h5M38 198.9h4M45 198.9h8M54 198.9h2M58 198.9h8M67 198.9h4M5 200.9h2" stroke="#6A9955" stroke-opacity="0.42" stroke-width="1.1" fill="none"/><path d="M10 2.9h1M18 2.9h1M47 2.9h1M23 4.9h1M36 4.9h1M89 4.9h1M3 14.9h1M16 14.9h1M21 14.9h1M50 14.9h1M11 22.9h1M16 22.9h1M15 30.9h1M21 30.9h1M37 30.9h1M42 30.9h1M63 30.9h1M68 30.9h1M73 30.9h1M29 56.9h1M58 56.9h1M63 56.9h1M72 56.9h1M7 118.9h1M27 118.9h1M35 118.9h1M40 118.9h1M43 118.9h1M54 118.9h1M60 118.9h1M65 118.9h1M90 118.9h1M7 120.9h1M12 120.9h1M28 120.9h1M34 120.9h1M36 120.9h1M40 120.9h1M79 120.9h1M16 122.9h1M67 122.9h1M81 122.9h1M7 176.9h1M52 176.9h1M85 176.9h1M89 176.9h1M7 178.9h1M53 178.9h1M71 178.9h1M87 178.9h1M7 198.9h1M37 198.9h1M42 198.9h1M66 198.9h1M71 198.9h1" stroke="#6A9955" stroke-opacity="0.7" stroke-width="1.1" fill="none"/><path d="M10 46.9h8M19 46.9h4M24 46.9h2M27 46.9h1M29 46.9h1M31 46.9h2M34 46.9h2M9 88.9h8M18 88.9h1M20 88.9h2M23 88.9h11M35 88.9h4M53 90.9h2M56 90.9h2M59 90.9h4M64 90.9h3M69 90.9h1M71 90.9h1M19 126.9h2M22 126.9h1M24 126.9h1M26 126.9h2M29 126.9h2M32 126.9h4M37 126.9h5M26 138.9h8M35 138.9h4M40 138.9h2M43 138.9h1M45 138.9h1M47 138.9h2M50 138.9h2M47 142.9h4M39 146.9h8M48 146.9h1M50 146.9h2M53 146.9h11M65 146.9h4M47 152.9h4M18 182.9h3M22 182.9h8M31 182.9h2M34 182.9h10M18 186.9h2M21 186.9h1M23 186.9h1M25 186.9h2M28 186.9h2M31 186.9h4M36 186.9h5M19 202.9h10M30 202.9h6M37 202.9h4M43 202.9h17M61 202.9h4M32 224.9h2M35 224.9h1M37 224.9h1M39 224.9h2M42 224.9h2M45 224.9h4M50 224.9h5M60 248.9h2M63 248.9h6M70 248.9h6M77 248.9h3" stroke="#DCDCAA" stroke-opacity="0.42" stroke-width="1.1" fill="none"/><path d="M9 46.9h1M18 46.9h1M23 46.9h1M26 46.9h1M28 46.9h1M30 46.9h1M33 46.9h1M17 88.9h1M19 88.9h1M22 88.9h1M34 88.9h1M39 88.9h1M52 90.9h1M55 90.9h1M58 90.9h1M63 90.9h1M67 90.9h2M70 90.9h1M18 126.9h1M21 126.9h1M23 126.9h1M25 126.9h1M28 126.9h1M31 126.9h1M36 126.9h1M25 138.9h1M34 138.9h1M39 138.9h1M42 138.9h1M44 138.9h1M46 138.9h1M49 138.9h1M47 146.9h1M49 146.9h1M52 146.9h1M64 146.9h1M69 146.9h1M21 182.9h1M30 182.9h1M33 182.9h1M17 186.9h1M20 186.9h1M22 186.9h1M24 186.9h1M27 186.9h1M30 186.9h1M35 186.9h1M18 202.9h1M29 202.9h1M36 202.9h1M41 202.9h2M60 202.9h1M65 202.9h1M31 224.9h1M34 224.9h1M36 224.9h1M38 224.9h1M41 224.9h1M44 224.9h1M49 224.9h1M59 248.9h1M62 248.9h1M69 248.9h1M76 248.9h1" stroke="#DCDCAA" stroke-opacity="0.7" stroke-width="1.1" fill="none"/><path d="M0 18.9h6M7 18.9h9M39 34.9h4M0 40.9h3M36 40.9h7M46 40.9h5M0 42.9h3M56 42.9h4M63 42.9h4M0 46.9h8M58 46.9h4M15 50.9h4M8 60.9h3M8 62.9h3M45 66.9h4M19 68.9h4M41 74.9h4M15 76.9h4M0 88.9h8M4 90.9h3M4 92.9h3M9 94.9h3M11 106.9h4M0 112.9h6M7 112.9h5M4 126.9h6M11 126.9h6M12 132.9h3M28 132.9h4M12 134.9h3M33 134.9h4M39 156.9h4M4 182.9h6M11 182.9h6M48 182.9h7M12 186.9h4M4 202.9h6M11 202.9h6M8 220.9h3M8 224.9h3M26 224.9h4M13 228.9h5M12 248.9h3" stroke="#569CD6" stroke-opacity="0.42" stroke-width="1.1" fill="none"/><path d="M17 94.9h1M21 210.9h1M22 212.9h1M18 220.9h1M28 220.9h1" stroke="#B5CEA8" stroke-opacity="0.42" stroke-width="1.1" fill="none"/><path d="M4 48.9h2M8 50.9h6M4 58.9h3M8 64.9h2M12 68.9h6M6 72.9h5M8 76.9h6M4 82.9h6M4 94.9h3M8 98.9h2M12 100.9h6M4 106.9h6M8 128.9h2M12 136.9h2M16 140.9h2M18 150.9h4M15 164.9h4M8 168.9h6M8 184.9h2M8 190.9h6M8 206.9h2M12 208.9h6M8 228.9h3M33 228.9h2M12 232.9h2M16 234.9h5M12 240.9h2M16 242.9h5M8 258.9h6" stroke="#C586C0" stroke-opacity="0.42" stroke-width="1.1" fill="none"/><path d="M14 164.9h1" stroke="#C586C0" stroke-opacity="0.7" stroke-width="1.1" fill="none"/><path d="M0 8.9h1M11 8.9h1M80 90.9h1M82 90.9h1" stroke="#CE9178" stroke-opacity="0.2" stroke-width="1.1" fill="none"/><path d="M1 8.9h10M81 90.9h1" stroke="#CE9178" stroke-opacity="0.42" stroke-width="1.1" fill="none"/><path d="M17 18.9h1M19 18.9h4M24 18.9h5M30 18.9h2M33 18.9h3M13 26.9h4M20 34.9h1M22 34.9h5M28 34.9h1M30 34.9h2M33 34.9h3M32 42.9h1M34 42.9h4M39 42.9h5M45 42.9h2M48 42.9h3M41 46.9h4M50 46.9h4M56 88.9h4M77 88.9h4M86 88.9h1M88 88.9h3M17 92.9h1M19 92.9h5M25 92.9h1M27 92.9h2M30 92.9h3M13 112.9h4M18 112.9h6M46 126.9h1M48 126.9h4M53 126.9h5M59 126.9h2M62 126.9h3M20 132.9h4M25 134.9h4M81 202.9h4" stroke="#4EC9B0" stroke-opacity="0.42" stroke-width="1.1" fill="none"/><path d="M18 18.9h1M23 18.9h1M29 18.9h1M32 18.9h1M12 26.9h1M17 26.9h1M19 34.9h1M21 34.9h1M27 34.9h1M29 34.9h1M32 34.9h1M33 42.9h1M38 42.9h1M44 42.9h1M47 42.9h1M40 46.9h1M45 46.9h1M49 46.9h1M54 46.9h1M55 88.9h1M60 88.9h1M76 88.9h1M81 88.9h1M85 88.9h1M87 88.9h1M16 92.9h1M18 92.9h1M24 92.9h1M26 92.9h1M29 92.9h1M17 112.9h1M47 126.9h1M52 126.9h1M58 126.9h1M61 126.9h1M19 132.9h1M24 132.9h1M24 134.9h1M29 134.9h1M80 202.9h1M85 202.9h1" stroke="#4EC9B0" stroke-opacity="0.7" stroke-width="1.1" fill="none"/><path d="M5 26.9h4M4 34.9h4M9 34.9h1M11 34.9h2M14 34.9h3M4 40.9h3M8 40.9h8M17 40.9h2M20 40.9h13M4 42.9h2M7 42.9h1M9 42.9h2M12 42.9h2M15 42.9h4M20 42.9h10M11 48.9h6M23 48.9h6M12 60.9h8M25 60.9h8M12 62.9h14M31 62.9h6M38 62.9h8M12 64.9h8M21 64.9h8M34 64.9h14M49 64.9h8M61 64.9h8M70 64.9h6M77 64.9h1M83 64.9h8M12 66.9h3M16 66.9h8M25 66.9h2M28 66.9h13M13 72.9h1M8 74.9h3M12 74.9h8M21 74.9h2M24 74.9h13M13 82.9h6M41 88.9h6M48 88.9h4M63 88.9h5M69 88.9h4M8 90.9h6M15 90.9h4M20 90.9h4M25 90.9h2M30 90.9h6M37 90.9h4M43 90.9h4M48 90.9h3M74 90.9h4M79 90.9h1M8 92.9h4M13 92.9h1M13 94.9h1M20 94.9h3M26 94.9h6M33 94.9h4M38 94.9h4M43 94.9h2M46 94.9h3M50 94.9h2M54 94.9h1M58 94.9h3M63 94.9h1M8 96.9h4M13 96.9h1M17 96.9h6M24 96.9h4M29 96.9h4M34 96.9h2M37 96.9h1M12 98.9h4M17 98.9h1M19 98.9h7M27 98.9h4M37 98.9h5M43 98.9h4M19 100.9h4M24 100.9h1M13 128.9h2M16 128.9h1M18 128.9h2M21 128.9h2M24 128.9h4M29 128.9h10M12 130.9h2M15 130.9h1M17 130.9h2M20 130.9h2M23 130.9h4M28 130.9h10M36 132.9h4M16 134.9h6M16 138.9h6M20 140.9h6M20 142.9h2M23 142.9h1M25 142.9h2M28 142.9h2M31 142.9h4M36 142.9h10M25 144.9h4M24 146.9h4M29 146.9h1M31 146.9h2M34 146.9h3M71 146.9h6M20 152.9h2M23 152.9h1M25 152.9h2M28 152.9h2M31 152.9h4M36 152.9h10M25 154.9h4M24 156.9h4M29 156.9h1M31 156.9h2M34 156.9h3M20 162.9h6M15 168.9h2M18 168.9h1M20 168.9h2M23 168.9h2M26 168.9h4M31 168.9h10M42 168.9h2M13 184.9h2M16 184.9h1M18 184.9h2M21 184.9h2M24 184.9h4M29 184.9h10M15 190.9h3M19 190.9h8M28 190.9h2M31 190.9h13M67 202.9h5M73 202.9h4M88 202.9h3M13 206.9h8M22 206.9h4M31 206.9h5M37 206.9h4M47 206.9h8M56 206.9h4M16 210.9h3M16 212.9h4M12 220.9h3M21 220.9h4M13 224.9h4M18 224.9h5M20 228.9h4M25 228.9h5M31 228.9h1M37 228.9h4M42 228.9h5M17 232.9h4M22 232.9h5M28 232.9h1M31 232.9h4M41 232.9h8M50 232.9h4M18 240.9h4M23 240.9h5M29 240.9h1M31 240.9h4M36 240.9h1M38 240.9h2M41 240.9h3M16 248.9h7M25 248.9h3M32 248.9h4M37 248.9h5M43 248.9h1M45 248.9h4M50 248.9h1M52 248.9h2M55 248.9h3M12 250.9h3M19 250.9h7M28 250.9h3M32 250.9h3M12 252.9h4M20 252.9h7M29 252.9h3M33 252.9h4M12 260.9h3M17 260.9h3M12 262.9h4M18 262.9h4" stroke="#9CDCFE" stroke-opacity="0.42" stroke-width="1.1" fill="none"/><path d="M4 26.9h1M9 26.9h1M8 34.9h1M10 34.9h1M13 34.9h1M7 40.9h1M16 40.9h1M19 40.9h1M33 40.9h1M6 42.9h1M8 42.9h1M11 42.9h1M14 42.9h1M19 42.9h1M37 46.9h1M9 48.9h1M21 48.9h1M34 48.9h1M23 60.9h1M29 62.9h1M76 64.9h1M15 66.9h1M24 66.9h1M27 66.9h1M41 66.9h1M11 74.9h1M20 74.9h1M23 74.9h1M37 74.9h1M11 82.9h1M47 88.9h1M52 88.9h1M68 88.9h1M73 88.9h1M14 90.9h1M19 90.9h1M24 90.9h1M36 90.9h1M41 90.9h1M47 90.9h1M78 90.9h1M12 92.9h1M32 94.9h1M37 94.9h1M42 94.9h1M49 94.9h1M12 96.9h1M23 96.9h1M28 96.9h1M33 96.9h1M16 98.9h1M26 98.9h1M31 98.9h1M42 98.9h1M47 98.9h1M23 100.9h1M15 128.9h1M17 128.9h1M20 128.9h1M23 128.9h1M28 128.9h1M14 130.9h1M16 130.9h1M19 130.9h1M22 130.9h1M27 130.9h1M16 132.9h1M35 132.9h1M40 132.9h1M53 138.9h1M22 142.9h1M24 142.9h1M27 142.9h1M30 142.9h1M35 142.9h1M24 144.9h1M29 144.9h1M32 144.9h1M28 146.9h1M30 146.9h1M33 146.9h1M79 146.9h1M22 152.9h1M24 152.9h1M27 152.9h1M30 152.9h1M35 152.9h1M24 154.9h1M29 154.9h1M32 154.9h1M28 156.9h1M30 156.9h1M33 156.9h1M16 162.9h1M21 164.9h1M17 168.9h1M19 168.9h1M22 168.9h1M25 168.9h1M30 168.9h1M15 184.9h1M17 184.9h1M20 184.9h1M23 184.9h1M28 184.9h1M18 190.9h1M27 190.9h1M30 190.9h1M44 190.9h1M72 202.9h1M77 202.9h1M21 206.9h1M26 206.9h1M36 206.9h1M41 206.9h1M55 206.9h1M60 206.9h1M12 224.9h1M17 224.9h1M19 228.9h1M24 228.9h1M30 228.9h1M36 228.9h1M41 228.9h1M16 232.9h1M21 232.9h1M27 232.9h1M30 232.9h1M35 232.9h1M49 232.9h1M54 232.9h1M17 240.9h1M22 240.9h1M28 240.9h1M35 240.9h1M37 240.9h1M40 240.9h1M23 248.9h2M31 248.9h1M36 248.9h1M42 248.9h1M49 248.9h1M51 248.9h1M54 248.9h1M26 250.9h2M27 252.9h2" stroke="#9CDCFE" stroke-opacity="0.7" stroke-width="1.1" fill="none"/><path d="M12 8.9h1M10 26.9h1M18 26.9h1M17 34.9h1M37 34.9h1M43 34.9h1M34 40.9h1M44 40.9h1M51 40.9h1M30 42.9h1M54 42.9h1M61 42.9h1M67 42.9h1M38 46.9h1M47 46.9h1M56 46.9h1M8 48.9h1M10 48.9h1M18 48.9h2M22 48.9h1M30 48.9h3M19 50.9h1M21 60.9h1M24 60.9h1M33 60.9h1M27 62.9h1M30 62.9h1M37 62.9h1M46 62.9h1M20 64.9h1M30 64.9h3M48 64.9h1M58 64.9h2M69 64.9h1M79 64.9h3M43 66.9h1M49 66.9h1M23 68.9h1M39 74.9h1M45 74.9h1M19 76.9h1M12 82.9h1M19 82.9h1M53 88.9h1M61 88.9h1M74 88.9h1M83 88.9h1M28 90.9h1M42 90.9h1M51 90.9h1M73 90.9h1M14 92.9h1M33 92.9h1M15 94.9h1M18 94.9h1M24 94.9h1M45 94.9h1M52 94.9h1M61 94.9h1M15 96.9h1M39 96.9h1M18 98.9h1M33 98.9h3M25 100.9h1M15 106.9h1M44 126.9h1M12 128.9h1M39 130.9h1M43 130.9h1M17 132.9h1M26 132.9h1M33 132.9h1M41 132.9h1M22 134.9h1M31 134.9h1M37 134.9h1M23 138.9h1M55 138.9h1M46 142.9h1M30 144.9h1M33 144.9h1M37 146.9h1M77 146.9h1M22 148.9h1M46 152.9h1M30 154.9h1M33 154.9h1M37 156.9h1M22 158.9h1M18 162.9h1M26 162.9h1M23 164.9h1M41 168.9h1M44 168.9h1M46 182.9h1M12 184.9h1M16 186.9h1M43 186.9h1M45 190.9h1M78 202.9h1M86 202.9h1M12 206.9h1M28 206.9h2M43 206.9h3M19 210.9h1M22 210.9h1M20 212.9h1M13 214.9h1M16 220.9h1M19 220.9h1M26 220.9h1M29 220.9h1M24 224.9h1M30 224.9h1M57 224.9h1M29 232.9h1M37 232.9h3M21 234.9h1M16 240.9h1M30 240.9h1M21 242.9h1M29 248.9h1M44 248.9h1M58 248.9h1M82 248.9h1M17 250.9h1M31 250.9h1M35 250.9h1M18 252.9h1M32 252.9h1M37 252.9h1M15 260.9h1M20 260.9h1M16 262.9h1M9 264.9h1" stroke="#D4D4D4" stroke-opacity="0.2" stroke-width="1.1" fill="none"/><path d="M37 18.9h1M0 36.9h1M51 42.9h2M36 46.9h1M46 46.9h1M63 46.9h1M7 48.9h1M35 48.9h1M37 48.9h1M4 52.9h1M8 58.9h1M11 64.9h1M8 70.9h1M4 72.9h1M12 72.9h1M14 72.9h1M16 72.9h1M4 78.9h1M0 84.9h1M40 88.9h1M82 88.9h1M72 90.9h1M8 94.9h1M56 94.9h1M64 94.9h3M68 94.9h1M36 96.9h1M38 96.9h1M11 98.9h1M48 98.9h1M50 98.9h1M8 102.9h1M4 104.9h1M0 108.9h1M25 112.9h1M42 126.9h2M65 126.9h2M68 126.9h1M11 128.9h1M39 128.9h1M41 128.9h1M41 130.9h2M15 136.9h1M52 138.9h1M54 138.9h1M19 140.9h1M26 140.9h1M28 140.9h1M51 142.9h2M70 146.9h1M80 146.9h1M20 148.9h2M16 150.9h1M23 150.9h1M51 152.9h2M20 158.9h2M16 160.9h1M12 164.9h1M20 164.9h1M22 164.9h1M8 166.9h1M4 170.9h1M44 182.9h2M56 182.9h1M11 184.9h1M39 184.9h1M41 184.9h1M41 186.9h2M8 188.9h1M4 192.9h1M66 202.9h1M11 206.9h1M61 206.9h1M63 206.9h1M19 208.9h1M12 214.9h1M8 216.9h1M55 224.9h2M12 228.9h1M47 228.9h1M49 228.9h1M15 232.9h1M55 232.9h1M57 232.9h1M12 236.9h1M15 240.9h1M44 240.9h1M46 240.9h1M12 244.9h1M80 248.9h2M16 250.9h1M17 252.9h1M8 254.9h1M15 258.9h1M8 264.9h1M4 266.9h1M0 268.9h1" stroke="#D4D4D4" stroke-opacity="0.42" stroke-width="1.1" fill="none"/></svg>
<div class="abs" style="left:385px;top:79px;width:835px;height:5px;background:linear-gradient(rgba(0,0,0,.55),rgba(0,0,0,0));"></div>
<div class="abs" style="left:1108px;top:79px;width:6px;height:607px;background:linear-gradient(to right,rgba(0,0,0,0),rgba(0,0,0,.42));"></div>
<div class="abs" style="left:1206px;top:79px;width:1px;height:607px;background:#3a3a3a;"></div>
<div class="abs" style="left:1206px;top:290px;width:14px;height:121px;background:rgba(121,121,121,.4);"></div>
<div class="abs" style="left:1207px;top:144.5px;width:4.4px;height:6.5px;background:#0b5ea6;"></div>
<div class="abs" style="left:1207px;top:380px;width:13px;height:2px;background:rgba(160,160,160,.7);"></div>
<div class="abs" style="left:1207px;top:380px;width:4px;height:5px;background:#3a78a8;"></div>
<div class="abs" style="left:1216px;top:380px;width:4px;height:5px;background:#b0453f;"></div>

<div class="abs" style="left:768px;top:556px;width:430px;height:36px;box-sizing:border-box;background:#252526;border:1px solid #454545;">
<div class="abs" style="left:0;top:0;width:428px;height:18px;background:#062f4a;"></div>
<svg class="abs" style="left:6.9px;top:1.6px" width="12.4" height="14.7" viewBox="0 0 12.4 14" preserveAspectRatio="none"><path d="M6.2 0.65 L11.75 3.6 V10.4 L6.2 13.35 L0.65 10.4 V3.6 Z M0.65 3.6 L6.2 6.7 L11.75 3.6 M6.2 6.7 V13.35" fill="#2a2630" stroke="#b180d7" stroke-width="1.2" stroke-linejoin="round"/></svg>
<svg class="abs" style="left:6.9px;top:19.6px" width="12.4" height="14.4" viewBox="0 0 12.4 14" preserveAspectRatio="none"><path d="M6.2 0.65 L11.75 3.6 V10.4 L6.2 13.35 L0.65 10.4 V3.6 Z M0.65 3.6 L6.2 6.7 L11.75 3.6 M6.2 6.7 V13.35" fill="#2a2630" stroke="#b180d7" stroke-width="1.2" stroke-linejoin="round"/></svg>
<div class="abs mono" style="left:24.8px;top:1px;height:18px;line-height:18px;color:#d4d4d4;"><span style="color:#0097fb;font-weight:bold">sl</span>ice</div>
<div class="abs mono" style="left:75.4px;top:1px;height:18px;line-height:18px;color:#97a3ad;">(method) Array&lt;IWindowChainElement&gt;.slice(st…</div>
<div class="abs mono" style="left:24.8px;top:19px;height:18px;line-height:18px;color:#d4d4d4;"><span style="color:#0097fb;font-weight:bold">s</span>p<span style="color:#0097fb;font-weight:bold">l</span>ice</div>
<div class="abs" style="left:404px;top:4.1px;width:10.3px;height:10.3px;border-radius:5.2px;background:#1a80c0;color:#c4d4e0;font-size:9px;line-height:10.3px;text-align:center;font-weight:bold;">i</div>
</div>
<div class="abs" style="left:0;top:686px;width:1220px;height:22px;background:#007acc;"></div>
<svg class="abs" style="left:13px;top:689px" width="12" height="16" viewBox="0 0 12 16">
 <g fill="none" stroke="#fff"><path d="M3.5 4.4 V11 M9 6.2 C9 8.8 3.6 8.4 3.5 11" stroke-width="1.5"/><circle cx="3.5" cy="3.2" r="1.35" stroke-width="1.1"/><circle cx="3.5" cy="12.3" r="1.35" stroke-width="1.1"/><circle cx="9" cy="5" r="1.35" stroke-width="1.1"/></g>
</svg>
<div class="t" style="left:27.90px;top:686px;height:22px;line-height:22px;color:#ffffff;font-size:12px;font-weight:normal;letter-spacing:0.288px;">master*</div>
<div class="abs" style="left:88.5px;top:690.3px;width:12.3px;height:12.3px;border-radius:6.2px;background:#fff;"></div>
<svg class="abs" style="left:88.5px;top:690.3px" width="12.3" height="12.3" viewBox="0 0 12 12"><path d="M3.3 3.3 L8.7 8.7 M8.7 3.3 L3.3 8.7" stroke="#007acc" stroke-width="2.1"/></svg>
<div class="t" style="left:105.40px;top:686px;height:22px;line-height:22px;color:#ffffff;font-size:12px;font-weight:normal;letter-spacing:0.185px;">7</div>
<svg class="abs" style="left:115.6px;top:690px" width="13" height="13" viewBox="0 0 13 13"><path d="M6.5 1 L12.6 12 H0.4 Z" fill="#fff" stroke="#fff" stroke-width="0.6" stroke-linejoin="round"/><path d="M6.5 4.6 V8.6 M6.5 9.8 V11.2" stroke="#007acc" stroke-width="1.5"/></svg>
<div class="t" style="left:133.10px;top:686px;height:22px;line-height:22px;color:#ffffff;font-size:12px;font-weight:normal;letter-spacing:0.185px;">0</div>
<div class="t" style="left:795.70px;top:686px;height:22px;line-height:22px;color:#ffffff;font-size:12px;font-weight:normal;letter-spacing:0.232px;">Ln 85, Col 45</div>
<div class="t" style="left:887.70px;top:686px;height:22px;line-height:22px;color:#ffffff;font-size:12px;font-weight:normal;letter-spacing:0.001px;">Tab Size: 4</div>
<div class="t" style="left:964.00px;top:686px;height:22px;line-height:22px;color:#ffffff;font-size:12px;font-weight:normal;letter-spacing:0.169px;">UTF-8</div>
<div class="t" style="left:1015.70px;top:686px;height:22px;line-height:22px;color:#ffffff;font-size:12px;font-weight:normal;letter-spacing:-0.674px;">LF</div>
<div class="t" style="left:1044.20px;top:686px;height:22px;line-height:22px;color:#ffffff;font-size:12px;font-weight:normal;letter-spacing:0.294px;">TypeScript</div>
<div class="t" style="left:1122.10px;top:686px;height:22px;line-height:22px;color:#ffffff;font-size:12px;font-weight:normal;letter-spacing:-0.754px;">3.5.1</div>
<svg class="abs" style="left:1163.6px;top:690.1px" width="12.6" height="12.6" viewBox="0 0 12.6 12.6"><circle cx="6.3" cy="6.3" r="6.3" fill="#fff"/><ellipse cx="3.9" cy="3.9" rx="0.85" ry="1.25" fill="#007acc"/><ellipse cx="8.6" cy="3.9" rx="0.85" ry="1.25" fill="#007acc"/><path d="M2.3 7 Q6.3 12.6 10.3 7" fill="none" stroke="#007acc" stroke-width="1.2"/></svg>
<svg class="abs" style="left:1192px;top:689px" width="13" height="15" viewBox="0 0 13 15"><path d="M6.5 0.8 C4.2 1 3.2 3.2 3.2 5.6 C3.2 8.6 1.6 9.4 0.9 10.9 H12.1 C11.4 9.4 9.8 8.6 9.8 5.6 C9.8 3.2 8.8 1 6.5 0.8 Z" fill="#fff"/><path d="M4.9 12.1 H8.1 L6.5 13.6 Z" fill="#fff"/></svg>
<div class="abs" style="left:0;top:0;width:1220px;height:708px;box-sizing:border-box;border-radius:5px;border-top:1px solid rgba(255,255,255,.3);border-left:1px solid rgba(255,255,255,.17);border-right:1px solid rgba(255,255,255,.15);border-bottom:0 solid transparent;"></div>

</div>
</body></html>
